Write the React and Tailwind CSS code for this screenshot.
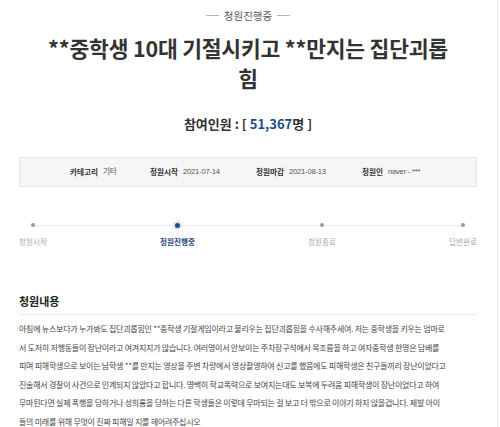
import React from 'react';

const info = [
  { label: '카테고리', value: '기타' },
  { label: '청원시작', value: '2021-07-14' },
  { label: '청원마감', value: '2021-08-13' },
  { label: '청원인', value: 'naver - ***' },
];

const steps = [
  { label: '청원시작', active: false },
  { label: '청원진행중', active: true },
  { label: '청원종료', active: false },
  { label: '답변완료', active: false },
];

const bodyLines = [
  '아침에 뉴스보다가 누가봐도 집단괴롭힘인 **중학생 기절게임이라고 불리우는 집단괴롭힘을 수사해주세여. 저는 중학생을 키우는 엄마로',
  '서 도저히 저행동들이 장난이라고 여겨지지가 않습니다. 여러명이서 안보이는 주차장구석에서 목조름을 하고 여자중학생 한명은 담배를',
  '피며 피해학생으로 보이는 남학생 **를 만지는 영상을 주변 차량에서 영상촬영하여 신고를 했음에도 피해학생은 친구들끼리 장난이었다고',
  '진술해서 경찰이 사건으로 인계되지 않았다고 합니다. 명백히 학교폭력으로 보여지는대도 보복에 두려움 피해학생이 장난이었다고 하여',
  '무마된다면 실제 폭행을 당하거나 성희롱을 당하는 다른 학생들은 이렇데 무마되는 걸 보고 더 밖으로 이야기 하지 않을겁니다. 제발 아이',
  '들의 미래를 위해 무엇이 진짜 피해일 지를 헤어려주십시오',
];

const App = () => {
  return (
    <div className="w-[500px] h-[427px] overflow-hidden bg-white font-['Noto_Sans_CJK_KR','Noto_Sans',sans-serif]">
      <div className="w-[498px] h-full border-r border-[#ececec] pl-[19px] pr-[20px] pt-[8px]">
        {/* Status */}
        <div className="flex items-center justify-center gap-[5px] text-[10.5px] leading-[15px] text-[#5a5a5a]">
          <span className="w-[13px] h-px bg-[#b5b5b5]" />
          <span>청원진행중</span>
          <span className="w-[13px] h-px bg-[#b5b5b5]" />
        </div>

        {/* Title */}
        <h1 className="mt-[10px] text-center text-[21.5px] leading-[30px] font-bold text-[#333] tracking-[-0.2px]">
          **중학생 10대 기절시키고 **만지는 집단괴롭
          <br />
          힘
        </h1>

        {/* Count */}
        <p className="mt-[22px] text-center text-[13px] leading-[18px] font-bold text-[#333]">
          참여인원 : [ <span className="text-[#1d4a86]">51,367</span>명 ]
        </p>

        {/* Info box */}
        <div className="mt-[24px] h-[30px] bg-[#f6f6f6] border border-[#e6e6e6] rounded-[2px] flex items-center pl-[50px] text-[7.6px] text-[#555]">
          {info.map((item) => (
            <div key={item.label} className="flex items-center w-[106px] first:w-[80px] gap-[5px]">
              <span className="font-bold text-[#333]">{item.label}</span>
              <span className="font-['Liberation_Sans','Noto_Sans_CJK_KR',sans-serif] tracking-[-0.2px]">{item.value}</span>
            </div>
          ))}
        </div>

        {/* Steps */}
        <div className="relative mt-[33px] flex justify-between">
          <div className="absolute left-[15px] right-[16px] top-[4.5px] h-px bg-[#ececec]" />
          {steps.map((step) => (
            <div key={step.label} className="relative flex flex-col items-center">
              <div className="w-[10px] h-[10px] flex items-center justify-center">
                {step.active ? (
                  <span className="w-[9px] h-[9px] rounded-full bg-[#dbe6f3] flex items-center justify-center">
                    <span className="w-[5px] h-[5px] rounded-full bg-[#1b4f91]" />
                  </span>
                ) : (
                  <span className="w-[4px] h-[4px] rounded-full bg-[#9a9a9a]" />
                )}
              </div>
              <span
                className={`mt-[6px] text-[7.6px] leading-[12px] ${
                  step.active ? 'text-[#2b4a78] font-bold' : 'text-[#aaa]'
                }`}
              >
                {step.label}
              </span>
            </div>
          ))}
        </div>

        {/* Content */}
        <h2 className="mt-[45px] pb-[5px] border-b border-[#ececec] text-[11px] leading-[16px] font-bold text-[#222]">
          청원내용
        </h2>
        <p className="mt-[5px] text-[8px] leading-[18.5px] text-[#444] tracking-[-0.25px] whitespace-nowrap">
          {bodyLines.map((line, i) => (
            <span key={i} className="block">
              {line}
            </span>
          ))}
        </p>
      </div>
    </div>
  );
};

export default App;
